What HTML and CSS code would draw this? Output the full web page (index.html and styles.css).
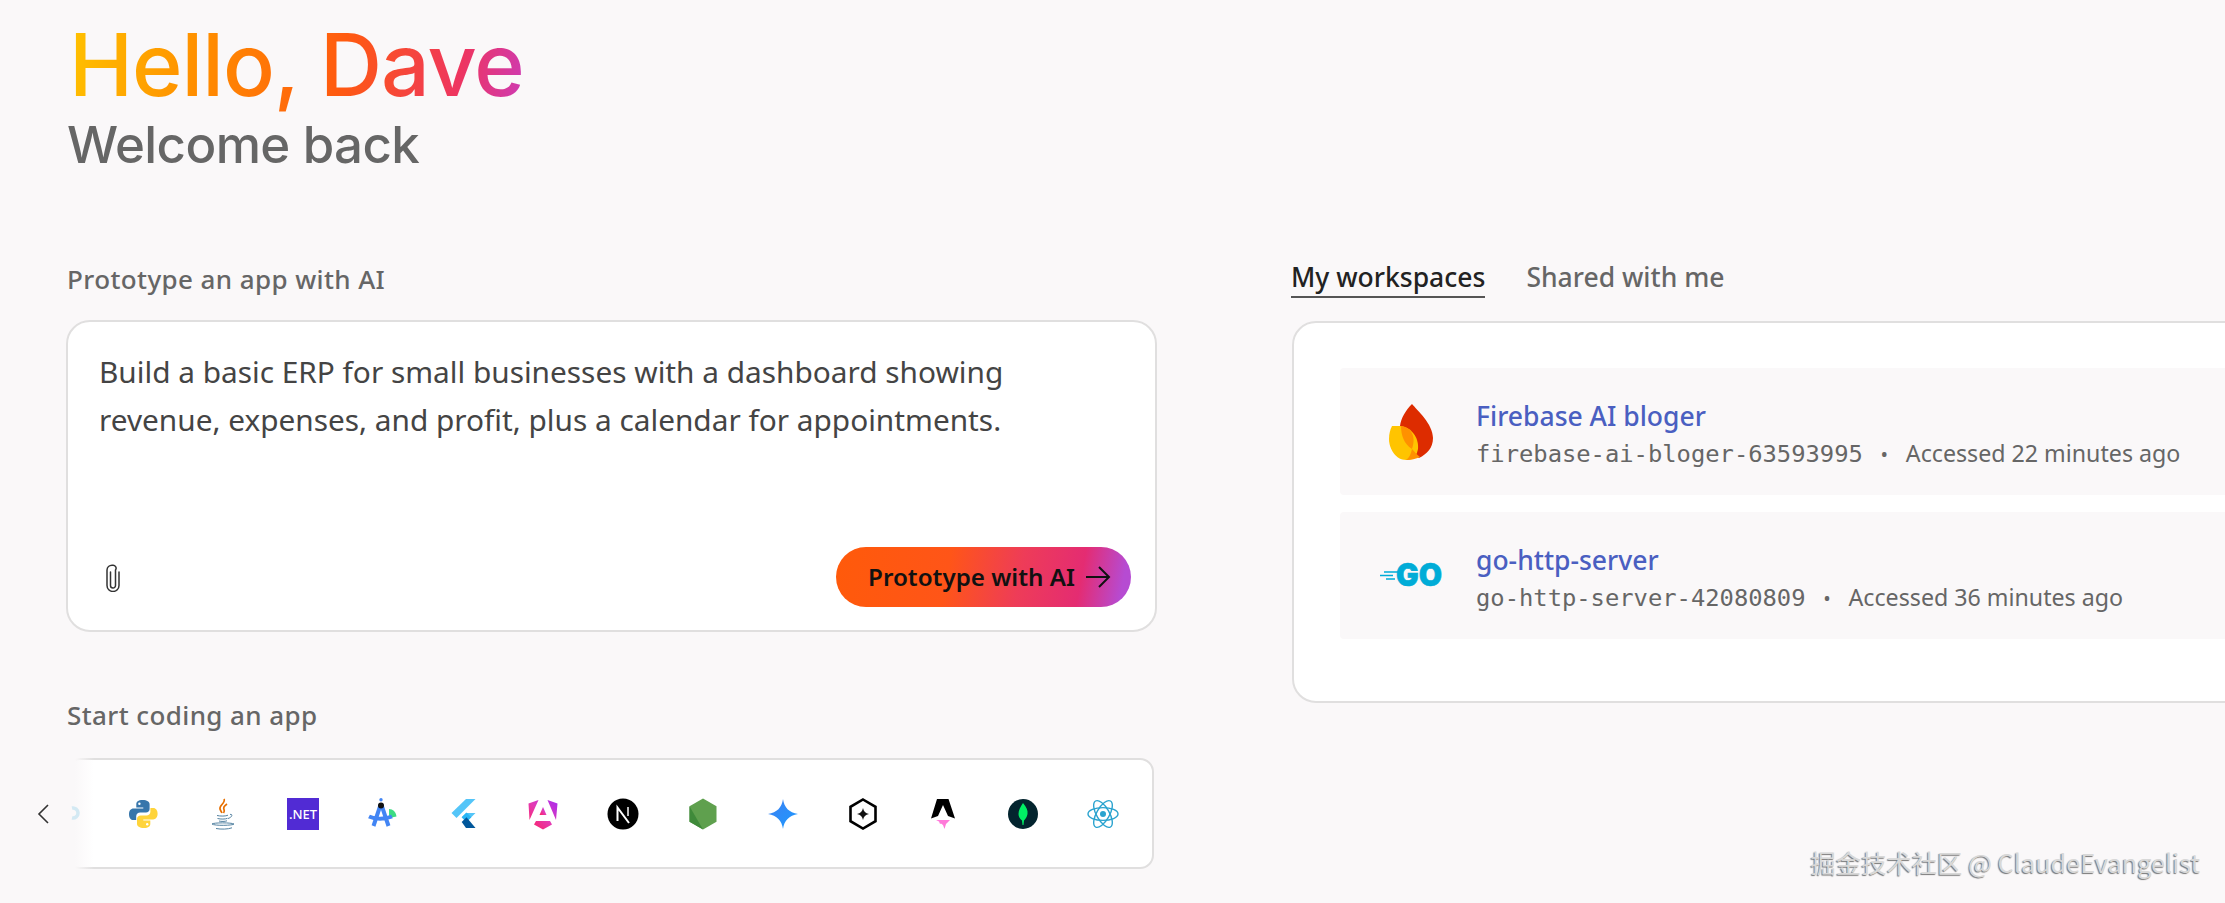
FILE: index.html
```html
<!DOCTYPE html>
<html lang="en">
<head>
<meta charset="utf-8">
<title>Firebase Studio</title>
<link rel="stylesheet" href="styles.css">
</head>
<body>
<main class="page">
  <header class="hero">
    <h1 class="hello">Hello, Dave</h1>
    <p class="welcome">Welcome back</p>
  </header>
  <div class="columns">
    <section class="left">
      <h2 class="label label-first">Prototype an app with AI</h2>
      <div class="prompt">
        <p class="prompt-text">Build a basic ERP for small businesses with a dashboard showing<br>revenue, expenses, and profit, plus a calendar for appointments.</p>
        <div class="prompt-actions">
          <svg class="clip" viewBox="0 0 16 28" fill="none" stroke="#333" stroke-width="1.5" stroke-linecap="round"><path d="M5.5 8v13.5a2.5 2.5 0 0 0 5 0V6a3.000 3.000 0 0 0-3-4.700h-.5A5 5 0 0 0 2 6v15.500a6 6 0 0 0 12 0V8"/></svg>
          <button class="cta"><span>Prototype with AI</span>
            <svg class="arrow" viewBox="0 0 26 24" fill="none" stroke="#111" stroke-width="2"><path d="M1 12h23M14 2l10 10-10 10"/></svg>
          </button>
        </div>
      </div>
      <h2 class="label label-second">Start coding an app</h2>
      <div class="carousel">
        <svg class="chev" viewBox="0 0 12 20" fill="none" stroke="#333" stroke-width="1.600"><path d="M11 1 2 10l9 9"/></svg>
        <svg class="peek" viewBox="0 0 10 14" fill="none" stroke="#d3e9f3" stroke-width="3.500"><path d="M2 2a5 5 0 0 1 6 5 5 5 0 0 1-6 5"/></svg>
        <div class="track">
          <svg class="tech" viewBox="0 0 32 32"><path fill="#3776ab" d="M15.700 2C11 2 9.300 3.700 9.300 6.200V9.500H16.300V10.600H6.500C3.800 10.600 2 12.800 2 16.200C2 19.800 3.800 22 6.300 22H9.200V18.300C9.200 16 11 14.500 13.200 14.500H19C21 14.500 22.600 13 22.600 11V6.200C22.600 3.700 20 2 15.700 2Z"/><circle cx="12.400" cy="5.700" r="1.200" fill="#fff"/><g transform="rotate(180 16.300 16)"><path fill="#ffd43b" d="M15.700 2C11 2 9.300 3.700 9.300 6.200V9.500H16.300V10.600H6.500C3.800 10.600 2 12.800 2 16.200C2 19.800 3.800 22 6.300 22H9.200V18.300C9.200 16 11 14.500 13.200 14.500H19C21 14.500 22.600 13 22.600 11V6.200C22.600 3.700 20 2 15.700 2Z"/><circle cx="12.400" cy="5.700" r="1.200" fill="#fff"/></g></svg>
          <svg class="tech" viewBox="0 0 32 32" fill="none"><path stroke="#e76f00" stroke-width="1.700" d="M17 1c2 4-5 6-4 10 .3 1.500 1.500 2.500 2 4M20 6c-3 2-4 3.500-3 5.500.5 1 .5 2-.5 3.500"/><path stroke="#5382a1" stroke-width="1" d="M10 17.500c3 .8 9 .8 11-.3M10.500 20.500c3 .8 8 .8 10-.2M12 23c2 .6 6 .6 8-.2M23 16.500c2.500-1 3 2.500-2 4M5 26c1-1.500 20-1.500 22 0 0 1.500-20 2-22 0ZM9 30.500c5 1 12 .8 16-.7"/></svg>
          <svg class="tech" viewBox="0 0 32 32"><rect width="32" height="32" fill="#512bd4"/><text x="16" y="21" class="net-text" text-anchor="middle">.NET</text></svg>
          <svg class="tech" viewBox="0 0 32 32" fill="none"><path fill="#3ddc84" d="M22 11c4 0 7 3 7.500 7.500L22 20z"/><path stroke="#4285f4" stroke-width="4" stroke-linejoin="round" d="M13.500 7 6.500 28M14.500 7 21.500 28M2 18.500c6 3 16 3 23 0"/><circle cx="14" cy="7.500" r="3" fill="#111"/><circle cx="14" cy="1.800" r="1.700" fill="#4285f4"/></svg>
          <svg class="tech" viewBox="0 0 32 32"><path fill="#54c5f8" d="M19 1h9.500L9.500 20 4.500 15z"/><path fill="#54c5f8" d="M19 15h9.500l-9 9-4.800-4.800z"/><path fill="#29b6f6" d="M14.700 19.200 19.500 14.500l4.800 4.800-4.800 4.700z"/><path fill="#01579b" d="M14.700 24 19.500 19.200 28.500 30H19z"/></svg>
          <svg class="tech" viewBox="0 0 32 32"><defs><linearGradient id="ng" x1="0" y1="1" x2="1" y2="0"><stop offset="0" stop-color="#ff1f5a"/><stop offset=".5" stop-color="#e33bb5"/><stop offset="1" stop-color="#a72bf0"/></linearGradient></defs><path fill="url(#ng)" d="M16 9l3.500 8h-7z"/><path fill="url(#ng)" d="M1.500 5.500 11.500 2 2.500 22zM20.500 2 30.500 5.500 29 22zM9 23h14l2 3.500-9 5-9-5z"/></svg>
          <svg class="tech" viewBox="0 0 32 32"><circle cx="16" cy="16" r="15.500" fill="#000"/><path fill="none" stroke="#fff" stroke-width="2" d="M10.500 23V9.500L22 25"/><path fill="none" stroke="#bbb" stroke-width="2" d="M21 9v9"/></svg>
          <svg class="tech" viewBox="0 0 32 32"><path fill="#5fa04e" d="M16 .500 29.500 8.200v15.600L16 31.500 2.500 23.800V8.200z"/><path fill="#3f8a3a" d="M2.500 8.200 16 31.500 2.500 23.800z"/></svg>
          <svg class="tech" viewBox="0 0 32 32"><defs><linearGradient id="gm" x1="0" y1="0" x2="1" y2="1"><stop offset="0" stop-color="#3f7ff2"/><stop offset="1" stop-color="#1a9bff"/></linearGradient></defs><path fill="url(#gm)" d="M16 1c1.200 8.500 6 13.500 15 15-9 1.500-13.800 6.500-15 15-1.200-8.500-6-13.500-15-15 9-1.500 13.800-6.500 15-15Z"/></svg>
          <svg class="tech" viewBox="0 0 32 32"><path fill="none" stroke="#000" stroke-width="2.600" d="M16 1.500 28.500 8.800v14.400L16 30.500 3.500 23.200V8.800z"/><path fill="#111" d="M16 10c.6 3.500 2.500 5.400 6 6-3.500.6-5.400 2.500-6 6-.6-3.500-2.500-5.400-6-6 3.500-.6 5.400-2.500 6-6Z"/></svg>
          <svg class="tech" viewBox="0 0 32 32"><path fill="#000" d="M10 1h11.500L28 20.500l-7 -2.500L16 7 11 18l-7 2.500z"/><path fill="#ff7ad9" d="M9 22h14l-3 3-1 1-1.500 5L16 27l-2-1.500-1 .5-1-2.500z"/></svg>
          <svg class="tech" viewBox="0 0 32 32"><circle cx="16" cy="16" r="15" fill="#03242e"/><path fill="#00ed64" d="M16 5c3.500 4 5 7.500 4.500 11-.4 3-2 5-3.500 6.500L16.500 27h-1l-.5-4.500C13 21 11.500 19 11.500 16c0-3.500 2-7.500 4.500-11Z"/></svg>
          <svg class="tech" viewBox="0 0 32 32" fill="none" stroke="#2aa3cf" stroke-width="1.400"><ellipse cx="16" cy="16" rx="15" ry="6.400"/><ellipse cx="16" cy="16" rx="15" ry="6.400" transform="rotate(60 16 16)"/><ellipse cx="16" cy="16" rx="15" ry="6.400" transform="rotate(120 16 16)"/><circle cx="16" cy="16" r="3" fill="#2aa3cf" stroke="none"/></svg>
        </div>
      </div>
    </section>
    <section class="right">
      <nav class="tabs">
        <span class="tab tab-active">My workspaces</span>
        <span class="tab">Shared with me</span>
      </nav>
      <div class="panel">
        <article class="row">
          <div class="row-icon">
            <svg class="firebase" viewBox="0 0 44 56"><path fill="#dd2c00" d="M23 0C28 6 44 20 44 34C44 44 38 50 30 54C22 50 12 40 11 22C12 14 17 6 23 0Z"/><path fill="#ffc400" d="M3 22H11C22 23 30 33 29 45C28 50 26 53 24 55C21 56 19 56 17 56C7 56 0 45 0 35C0 30 1 26 3 22Z"/><path fill="#ff9100" d="M12 22C21 23 28 31 23 45C15 40 12 31 12 22ZM23 45C26 48 28 51 31 53C27 55 22 56 17 56C20 54 22 50 23 45Z"/></svg>
          </div>
          <div class="row-body">
            <a class="row-title">Firebase AI bloger</a>
            <p class="row-meta"><span class="mono">firebase-ai-bloger-63593995</span><span class="dot">•</span><span>Accessed 22 minutes ago</span></p>
          </div>
        </article>
        <article class="row">
          <div class="row-icon">
            <svg class="go" viewBox="0 0 62 23"><path stroke="#00acd7" stroke-width="1.300" d="M0 11.500h13M4 8h14M6 15h9"/><text x="16" y="22" class="go-text" textLength="46" lengthAdjust="spacingAndGlyphs">GO</text></svg>
          </div>
          <div class="row-body">
            <a class="row-title">go-http-server</a>
            <p class="row-meta"><span class="mono">go-http-server-42080809</span><span class="dot">•</span><span>Accessed 36 minutes ago</span></p>
          </div>
        </article>
      </div>
    </section>
  </div>
  <div class="watermark">掘金技术社区 @ ClaudeEvangelist</div>
</main>
</body>
</html>
```

FILE: styles.css
```css
* { box-sizing: border-box; }
html, body { margin: 0; height: 100%; overflow: hidden; background: #faf8f9; }
body { font-family: "Noto Sans", "Open Sans", sans-serif; color: #333; }
p, h1, h2 { margin: 0; }

.page { position: relative; height: 903px; width: 2225px; overflow: hidden; padding: 0 0 0 66px; }

.hero { padding-top: 15px; }
.hello {
  display: inline-block;
  font-family: Inter, sans-serif;
  font-weight: 500;
  font-size: 86px;
  line-height: 100px;
  letter-spacing: -1px;
  padding-left: 3px;
  background: linear-gradient(100deg, #ffc400 0%, #ff8a00 32%, #ff5a10 60%, #ee3560 85%, #cc3ab8 100%);
  -webkit-background-clip: text;
  background-clip: text;
  color: transparent;
}
.welcome {
  font-family: Inter, sans-serif;
  font-weight: 500;
  font-size: 51px;
  line-height: 60px;
  letter-spacing: -.6px;
  color: #666;
  padding-left: 1px;
}

.columns { display: flex; gap: 135px; margin-top: 87px; align-items: flex-start; }
.left { width: 1091px; flex: none; position: relative; }
.right { width: 1000px; flex: none; }

.label { font-size: 26px; line-height: 34px; font-weight: 500; letter-spacing: .4px; color: #666; }
.label-first { margin-left: 1px; margin-bottom: 24px; }
.label-second { margin: 66px 0 0 1px; }

.prompt {
  height: 312px;
  background: #fff;
  border: 2px solid #e0dfdf;
  border-radius: 24px;
  padding: 26px 24px 23px 31px;
  display: flex;
  flex-direction: column;
  justify-content: space-between;
}
.prompt-text { font-size: 29.800px; line-height: 48px; color: #444; }
.prompt-actions { display: flex; justify-content: space-between; align-items: center; }
.clip { width: 16px; height: 28px; margin-left: 6px; margin-top: 1px; }
.cta {
  width: 295px; height: 60px;
  border: 0; border-radius: 30px;
  padding: 0 20px 0 32px;
  display: flex; align-items: center; justify-content: space-between;
  background: linear-gradient(100deg, #ff5a0a 0%, #ff5518 38%, #ee3c58 62%, #e42c72 82%, #b64bd2 96%);
  font: 600 24.200px/1 "Noto Sans", sans-serif;
  color: #111;
}
.arrow { width: 26px; height: 24px; }

.carousel {
  position: relative;
  margin-top: 26px;
  height: 111px;
  background: #fff;
  border: 2px solid #e0dfdf;
  border-radius: 14px;
  width: 1088px;
  display: flex;
  align-items: center;
}
.carousel::before {
  content: "";
  position: absolute;
  left: -3px; top: -3px; bottom: -3px;
  width: 29px;
  background: linear-gradient(90deg, #faf8f9 0 10px, rgba(250,248,249,0) 100%);
  z-index: 1;
}
.track { display: flex; gap: 48px; padding-left: 59px; align-items: center; }
.tech { width: 32px; height: 32px; flex: none; }
.net-text { font: 500 13px "Noto Sans", sans-serif; fill: #fff; }
.chev { position: absolute; left: -31px; top: 44px; width: 12px; height: 20px; z-index: 2; }
.peek { position: absolute; left: 2px; top: 46px; width: 10px; height: 14px; z-index: 2; }

.tabs { display: flex; gap: 41px; height: 63px; margin: -4px 0 0 -1px; }
.tab { font-size: 26.500px; line-height: 38px; height: 40px; font-weight: 500; color: #666; }
.tab-active { color: #222; border-bottom: 2px solid #555; }

.panel {
  background: #fff;
  border: 2px solid #e0dfdf;
  border-radius: 24px;
  height: 382px;
  padding: 45px 0 0 46px;
  display: flex;
  flex-direction: column;
  gap: 17px;
}
.row {
  height: 127px;
  flex: none;
  background: #faf8f9;
  display: flex;
  align-items: center;
  border-radius: 4px;
  margin-right: -100px;
}
.row-icon { width: 136px; flex: none; display: flex; justify-content: center; padding-left: 6px; }
.firebase { width: 44px; height: 56px; }
.go { width: 62px; height: 23px; overflow: visible; }
.go-text { font: 900 31px Inter, sans-serif; fill: #00acd7; stroke: #00acd7; stroke-width: .6px; }
.row-body { padding-top: 6px; }
.row-title { display: block; font-size: 26.500px; line-height: 36px; font-weight: 500; color: #4a5fc1; position: relative; top: 2px; }
.row-meta { font-size: 23.200px; line-height: 36px; margin-top: 3px; color: #666; display: flex; align-items: baseline; }
.mono { font-family: "DejaVu Sans Mono", monospace; font-size: 23.800px; }
.dot { width: 43px; text-align: center; font-size: 20px; }

.watermark {
  position: absolute;
  right: 25px; top: 846px;
  font-family: "Noto Sans CJK SC", "Noto Sans", sans-serif;
  font-size: 25.300px; line-height: 32px;
  color: #d8d8d8;
  text-shadow: -1px 1px 1px #777;
}
```
